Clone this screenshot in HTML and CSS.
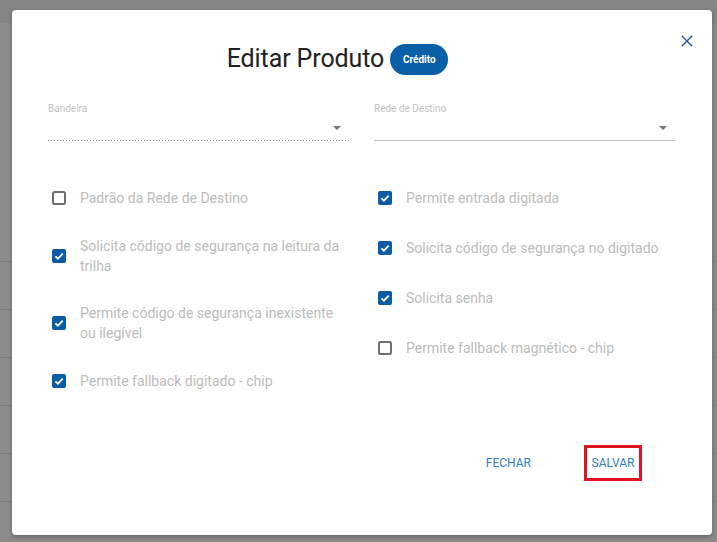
FILE: index.html
```html
<!DOCTYPE html>
<html lang="pt-BR">
<head>
<meta charset="utf-8">
<title>Editar Produto</title>
<link rel="stylesheet" href="styles.css">
</head>
<body>
  <div class="backdrop">
    <div class="appbar"></div>
    <div class="rows">
      <div class="row"></div>
      <div class="row"></div>
      <div class="row"></div>
      <div class="row"></div>
      <div class="row"></div>
      <div class="row"></div>
    </div>
  </div>

  <div class="dialog" role="dialog" aria-labelledby="dlg-title">
    <div class="dialog-header">
      <div class="title-wrap">
        <h2 class="title" id="dlg-title">Editar Produto</h2>
        <span class="badge">Crédito</span>
      </div>
      <button class="close" type="button" aria-label="Fechar">
        <svg width="12" height="12" viewBox="0 0 12 12"><path d="M0.8 0.8 L11.2 11.2 M11.2 0.8 L0.8 11.2" stroke="#1d5f9f" stroke-width="1.4" fill="none"/></svg>
      </button>
    </div>

    <div class="selects">
      <div class="field">
        <label class="field-label">Bandeira</label>
        <div class="field-input dotted"><span class="caret"></span></div>
      </div>
      <div class="field">
        <label class="field-label">Rede de Destino</label>
        <div class="field-input solid"><span class="caret"></span></div>
      </div>
    </div>

    <div class="options">
      <div class="opt-col col-left">
        <label class="opt">
          <svg class="box" width="14" height="14" viewBox="0 0 14 14"><rect x="1" y="1" width="12" height="12" rx="1.5" fill="none" stroke="#707070" stroke-width="2"/></svg>
          <span class="opt-text">Padrão da Rede de Destino</span>
        </label>
        <label class="opt">
          <svg class="box" width="14" height="14" viewBox="0 0 14 14"><rect width="14" height="14" rx="2" fill="#0b5ca5"/><path d="M3.4 7.3 L5.9 9.7 L10.7 4.7" stroke="#fff" stroke-width="1.8" fill="none"/></svg>
          <span class="opt-text">Solicita código de segurança na leitura da trilha</span>
        </label>
        <label class="opt">
          <svg class="box" width="14" height="14" viewBox="0 0 14 14"><rect width="14" height="14" rx="2" fill="#0b5ca5"/><path d="M3.4 7.3 L5.9 9.7 L10.7 4.7" stroke="#fff" stroke-width="1.8" fill="none"/></svg>
          <span class="opt-text">Permite código de segurança inexistente ou ilegível</span>
        </label>
        <label class="opt">
          <svg class="box" width="14" height="14" viewBox="0 0 14 14"><rect width="14" height="14" rx="2" fill="#0b5ca5"/><path d="M3.4 7.3 L5.9 9.7 L10.7 4.7" stroke="#fff" stroke-width="1.8" fill="none"/></svg>
          <span class="opt-text">Permite fallback digitado - chip</span>
        </label>
      </div>
      <div class="opt-col col-right">
        <label class="opt">
          <svg class="box" width="14" height="14" viewBox="0 0 14 14"><rect width="14" height="14" rx="2" fill="#0b5ca5"/><path d="M3.4 7.3 L5.9 9.7 L10.7 4.7" stroke="#fff" stroke-width="1.8" fill="none"/></svg>
          <span class="opt-text">Permite entrada digitada</span>
        </label>
        <label class="opt">
          <svg class="box" width="14" height="14" viewBox="0 0 14 14"><rect width="14" height="14" rx="2" fill="#0b5ca5"/><path d="M3.4 7.3 L5.9 9.7 L10.7 4.7" stroke="#fff" stroke-width="1.8" fill="none"/></svg>
          <span class="opt-text">Solicita código de segurança no digitado</span>
        </label>
        <label class="opt">
          <svg class="box" width="14" height="14" viewBox="0 0 14 14"><rect width="14" height="14" rx="2" fill="#0b5ca5"/><path d="M3.4 7.3 L5.9 9.7 L10.7 4.7" stroke="#fff" stroke-width="1.8" fill="none"/></svg>
          <span class="opt-text">Solicita senha</span>
        </label>
        <label class="opt">
          <svg class="box" width="14" height="14" viewBox="0 0 14 14"><rect x="1" y="1" width="12" height="12" rx="1.5" fill="none" stroke="#707070" stroke-width="2"/></svg>
          <span class="opt-text">Permite fallback magnético - chip</span>
        </label>
      </div>
    </div>

    <div class="actions">
      <button class="btn" type="button">Fechar</button>
      <button class="btn btn-marked" type="button">Salvar</button>
    </div>
  </div>
</body>
</html>
```

FILE: styles.css
```css
* { box-sizing: border-box; }

html, body {
  margin: 0;
  height: 100%;
}

body {
  background: #8b8b8b;
  font-family: Roboto, "Liberation Sans", Arial, sans-serif;
  overflow: hidden;
}

/* dimmed page behind the modal */
.backdrop { width: 100%; }

.appbar {
  height: 23px;
  background: #858585;
}

.rows { margin-top: 191px; }

.row {
  height: 48px;
  border-bottom: 1px solid #7d7d7d;
}

/* modal window */
.dialog {
  position: absolute;
  left: 12px;
  top: 10px;
  width: 700px;
  height: 525px;
  background: #fff;
  border-radius: 4px;
  box-shadow: 0 2px 4px rgba(0, 0, 0, 0.28);
  padding: 19px 13px 0 36px;
  display: flex;
  flex-direction: column;
}

.dialog-header {
  display: flex;
  align-items: flex-start;
  gap: 12px;
  margin-left: -36px;
}

.title-wrap {
  flex: 1;
  display: flex;
  justify-content: center;
  align-items: center;
  gap: 6px;
  margin-top: 14px;
  height: 32px;
}

.title {
  margin: 0;
  font-size: 25px;
  font-weight: 400;
  line-height: 32px;
  color: #212121;
  letter-spacing: -0.1px;
}

.badge {
  display: inline-flex;
  align-items: center;
  justify-content: center;
  width: 58px;
  height: 31px;
  border-radius: 16px;
  background: #0a5fa9;
  color: #fff;
  font-size: 10px;
  font-weight: 700;
}

.close {
  width: 24px;
  height: 24px;
  padding: 0;
  border: 0;
  background: none;
  display: flex;
  align-items: center;
  justify-content: center;
  cursor: pointer;
}

/* select fields */
.selects {
  display: grid;
  grid-template-columns: 302px 302px;
  column-gap: 24px;
  margin-top: 27px;
}

.field-label {
  display: block;
  font-size: 10px;
  line-height: 13px;
  color: #c2c2c2;
}

.field-input {
  position: relative;
  height: 26px;
}

.field-input.solid { border-bottom: 1px solid #c8c8c8; }

.field-input.dotted {
  background-image: linear-gradient(to right, #9a9a9a 1px, transparent 1px);
  background-size: 3px 1px;
  background-repeat: repeat-x;
  background-position: left bottom;
}

.caret {
  position: absolute;
  right: 9px;
  top: 11px;
  width: 0;
  height: 0;
  border-left: 4px solid transparent;
  border-right: 4px solid transparent;
  border-top: 4px solid #757575;
}

/* checkbox columns */
.options {
  display: grid;
  grid-template-columns: 302px 302px;
  column-gap: 24px;
  margin-top: 47px;
}

.opt-col {
  display: flex;
  flex-direction: column;
}

.col-left { gap: 27.5px; }
.col-right { gap: 30px; }

.opt {
  display: flex;
  align-items: center;
  padding-left: 4px;
  gap: 14px;
}

.box { flex: none; }

.opt-text {
  font-size: 14px;
  line-height: 20px;
  color: #bcbcbc;
  max-width: 262px;
}

/* footer buttons */
.actions {
  display: flex;
  justify-content: flex-end;
  align-items: center;
  gap: 45px;
  margin-top: auto;
  margin-bottom: 54px;
  padding-right: 57px;
}

.btn {
  height: 36px;
  min-width: 58px;
  padding: 0 8px;
  border: 0;
  background: none;
  font-family: inherit;
  font-size: 12px;
  font-weight: 400;
  text-transform: uppercase;
  color: #3080c2;
  cursor: pointer;
}

.btn-marked {
  border: 3px solid #e0141e;
  padding: 0 4px;
}
```
